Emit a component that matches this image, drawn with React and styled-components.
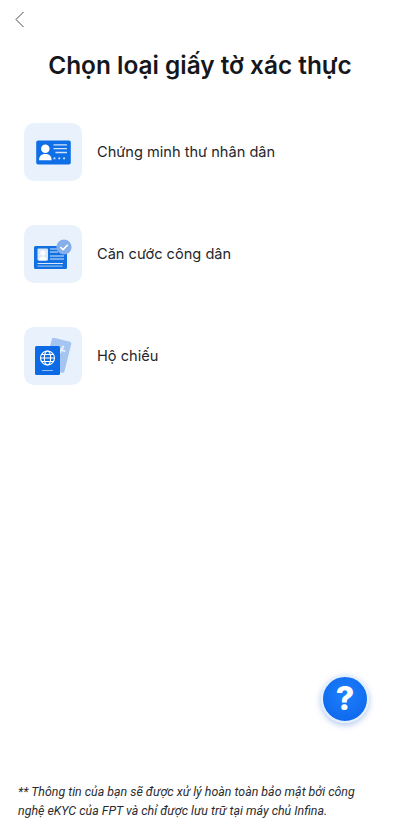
import React from "react";
import styled, { createGlobalStyle } from "styled-components";

const Global = createGlobalStyle`
  html, body { margin: 0; padding: 0; background: #fff; }
  * { box-sizing: border-box; }
`;

const Page = styled.div`
  position: relative;
  width: 400px;
  height: 835px;
  display: flex;
  flex-direction: column;
  background: #fff;
  overflow: hidden;
  color: #15171c;
`;

const TopBar = styled.div`
  height: 40px;
  padding: 11px 0 0 15px;
  display: flex;
  align-items: flex-start;
`;

const BackIcon = () => (
  <svg width="10" height="17" viewBox="0 0 10 17" fill="none">
    <path d="M8.5 1 L1 8.5 L8.5 16" stroke="#4a4d52" strokeWidth="1" />
  </svg>
);

const Title = styled.h1`
  margin: 9px 0 0;
  text-align: center;
  font-family: "Inter", sans-serif;
  font-weight: 600;
  font-size: 24.4px;
  line-height: 32px;
  color: #15171c;
`;

const List = styled.div`
  margin-top: 42px;
  padding: 0 24px;
  display: flex;
  flex-direction: column;
  gap: 44px;
`;

const Row = styled.div`
  display: flex;
  align-items: center;
  gap: 15px;
`;

const IconTile = styled.div`
  width: 58px;
  height: 58px;
  border-radius: 10px;
  background: #e9f2fc;
  display: flex;
  align-items: center;
  justify-content: center;
`;

const RowLabel = styled.span`
  font-family: "Inter", sans-serif;
  font-size: 14.6px;
  color: #24262b;
  margin-top: -1px;
`;

const Spacer = styled.div`
  flex: 1;
`;

const Footnote = styled.p`
  margin: 0 0 15px;
  padding: 0 40px 0 18px;
  font-family: "Roboto", sans-serif;
  font-style: italic;
  font-size: 12.4px;
  line-height: 19px;
  color: #2a2c30;
`;

const HelpButton = styled.div`
  position: absolute;
  left: 321px;
  top: 675px;
  width: 48px;
  height: 48px;
  border-radius: 50%;
  border: 2.5px solid #e3effd;
  background: radial-gradient(circle at 50% 40%, #1d80fb, #0b62ea);
  box-shadow: 0 2px 6px rgba(20, 90, 200, 0.35);
  display: flex;
  align-items: center;
  justify-content: center;
  color: #fff;
  font-family: "Inter", sans-serif;
  font-weight: 800;
  font-size: 32px;
  line-height: 1;
`;

const IdIcon = () => (
  <svg width="35" height="25" viewBox="0 0 36 26">
    <rect x="0" y="0.5" width="36" height="25" rx="2" fill="#0f6fe6" />
    <circle cx="9.5" cy="9" r="4.4" fill="#fff" />
    <path d="M3 21 C3 16 6 14.5 9.5 14.5 C13 14.5 16 16 16 21 Z" fill="#fff" />
    <path d="M18 5 H32 M18 9 H32 M20 13 H32" stroke="#cfe3fb" strokeWidth="1.4" />
    <path d="M18 19 H20 M23 19 H25 M28 19 H30" stroke="#cfe3fb" strokeWidth="1.8" />
  </svg>
);

const CitizenIcon = () => (
  <svg width="38" height="30" viewBox="0 0 38 30">
    <rect x="0" y="7" width="33" height="23" rx="1.5" fill="#1270e0" />
    <rect x="3.5" y="9.5" width="10.5" height="12" rx="1" fill="#dbe9f8" />
    <circle cx="8.8" cy="14" r="2.5" fill="#fff" />
    <path d="M5 21.5 C5 18.5 7 17.5 8.8 17.5 C10.6 17.5 12.6 18.5 12.6 21.5 Z" fill="#fff" />
    <path d="M16 10 H24 M16 13 H24 M16 17 H30 M16 20 H30 M3.5 24.5 H29" stroke="#d6e7fb" strokeWidth="1.2" />
    <rect x="3.5" y="26.5" width="25" height="1.2" fill="#8dbcf2" />
    <circle cx="30" cy="8" r="7.6" fill="#86aeea" />
    <path d="M26.3 8 L29 10.6 L33.8 5.9" stroke="#fff" strokeWidth="1.5" fill="none" />
  </svg>
);

const PassportIcon = () => (
  <svg width="37" height="37" viewBox="0 0 37 37">
    <g transform="rotate(14 24 18)">
      <rect x="13" y="1.5" width="20" height="32" rx="2" fill="#a4c5f1" />
      <path d="M26 7 L24 15 M21 11 L29 12" stroke="#e5effb" strokeWidth="2" />
      <path d="M18 21 V29 M21 21 V29" stroke="#d3e3f8" strokeWidth="1" />
    </g>
    <rect x="0" y="8" width="25" height="29" rx="1.5" fill="#0c6ae4" />
    <g stroke="#fff" strokeWidth="1.1" fill="none">
      <circle cx="12.5" cy="20" r="7" />
      <ellipse cx="12.5" cy="20" rx="3.2" ry="7" />
      <path d="M5.5 20 H19.5 M6.5 16.5 H18.5 M6.5 23.5 H18.5" />
    </g>
    <path d="M7 32.5 H18" stroke="#8fbdf4" strokeWidth="1" />
  </svg>
);

const items = [
  { label: "Chứng minh thư nhân dân", Icon: IdIcon },
  { label: "Căn cước công dân", Icon: CitizenIcon },
  { label: "Hộ chiếu", Icon: PassportIcon },
];

export default function App() {
  return (
    <Page>
      <Global />
      <TopBar>
        <BackIcon />
      </TopBar>
      <Title>Chọn loại giấy tờ xác thực</Title>
      <List>
        {items.map(({ label, Icon }) => (
          <Row key={label}>
            <IconTile>
              <Icon />
            </IconTile>
            <RowLabel>{label}</RowLabel>
          </Row>
        ))}
      </List>
      <Spacer />
      <Footnote>
        ** Thông tin của bạn sẽ được xử lý hoàn toàn bảo mật bởi công nghệ eKYC của FPT và chỉ được lưu trữ tại máy chủ Infina.
      </Footnote>
      <HelpButton>?</HelpButton>
    </Page>
  );
}
